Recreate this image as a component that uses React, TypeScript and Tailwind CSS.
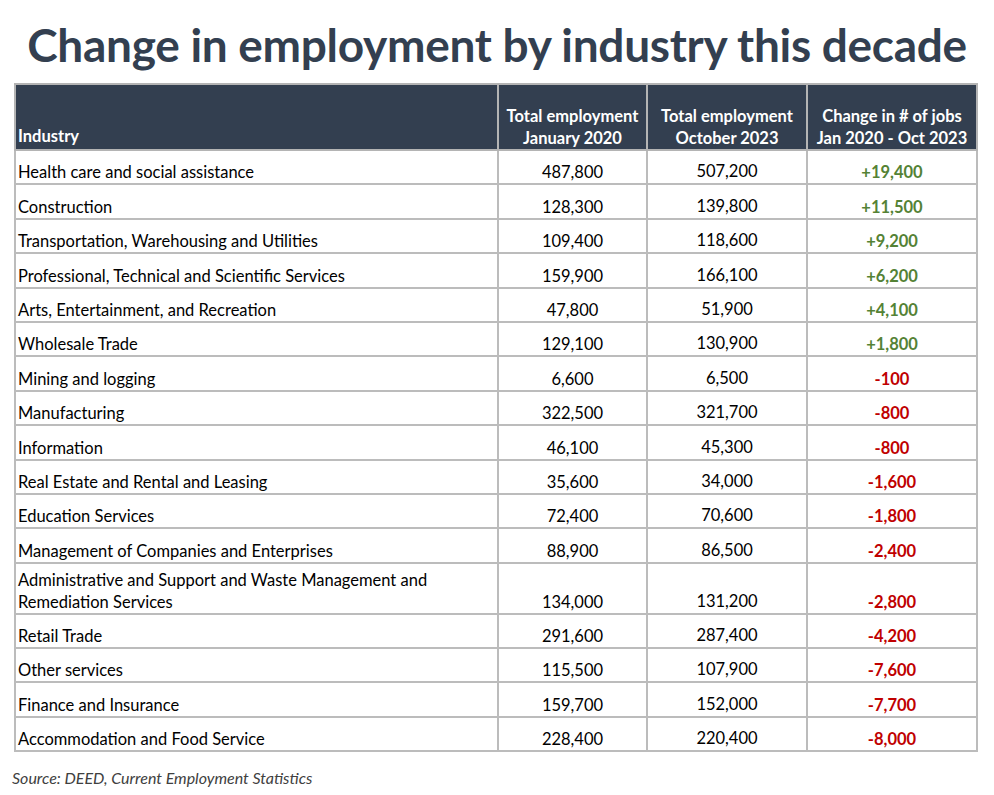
const rows: [string, string, string, string][] = [
  ['Health care and social assistance', '487,800', '507,200', '+19,400'],
  ['Construction', '128,300', '139,800', '+11,500'],
  ['Transportation, Warehousing and Utilities', '109,400', '118,600', '+9,200'],
  ['Professional, Technical and Scientific Services', '159,900', '166,100', '+6,200'],
  ['Arts, Entertainment, and Recreation', '47,800', '51,900', '+4,100'],
  ['Wholesale Trade', '129,100', '130,900', '+1,800'],
  ['Mining and logging', '6,600', '6,500', '-100'],
  ['Manufacturing', '322,500', '321,700', '-800'],
  ['Information', '46,100', '45,300', '-800'],
  ['Real Estate and Rental and Leasing', '35,600', '34,000', '-1,600'],
  ['Education Services', '72,400', '70,600', '-1,800'],
  ['Management of Companies and Enterprises', '88,900', '86,500', '-2,400'],
  ['Administrative and Support and Waste Management and Remediation Services', '134,000', '131,200', '-2,800'],
  ['Retail Trade', '291,600', '287,400', '-4,200'],
  ['Other services', '115,500', '107,900', '-7,600'],
  ['Finance and Insurance', '159,700', '152,000', '-7,700'],
  ['Accommodation and Food Service', '228,400', '220,400', '-8,000'],
];

export default function App() {
  return (
    <div
      className="w-[994px] h-[795px] bg-white overflow-hidden"
      style={{ fontFamily: 'Lato, "Open Sans", sans-serif' }}
    >
      <h1 className="text-center text-[46px] font-bold text-[#333f50] leading-none pt-[22px] pb-[15px] tracking-[-0.3px]">
        Change in employment by industry this decade
      </h1>
      <table className="ml-[14px] w-[962px] border-collapse table-fixed text-[16.5px] text-black">
        <colgroup>
          <col className="w-[483px]" />
          <col className="w-[149px]" />
          <col className="w-[160px]" />
          <col className="w-[170px]" />
        </colgroup>
        <thead>
          <tr className="h-[66px] bg-[#333f50] text-white font-bold">
            <th className="border-2 border-[#b4b4b4] text-left align-bottom px-[2px] pb-[0px] font-bold">Industry</th>
            <th className="border-2 border-[#b4b4b4] text-center align-bottom pb-[0px] leading-[22px] font-bold">
              Total employment<br />January 2020
            </th>
            <th className="border-2 border-[#b4b4b4] text-center align-bottom pb-[0px] leading-[22px] font-bold">
              Total employment<br />October 2023
            </th>
            <th className="border-2 border-[#b4b4b4] text-center align-bottom pb-[0px] leading-[22px] font-bold">
              Change in # of jobs<br />Jan 2020 - Oct 2023
            </th>
          </tr>
        </thead>
        <tbody>
          {rows.map(([name, jan, oct, change]) => {
            const multi = name.length > 60;
            return (
              <tr key={name} className={multi ? 'h-[51px]' : 'h-[34.4px]'}>
                <td className="border-2 border-[#bcbcbc] px-[2px] align-bottom pb-0 leading-[22px]">
                  {multi ? (
                    <>
                      Administrative and Support and Waste Management and<br />Remediation Services
                    </>
                  ) : (
                    name
                  )}
                </td>
                <td className="border-2 border-[#bcbcbc] text-center align-bottom pb-0 leading-[22px]">{jan}</td>
                <td className="border-2 border-[#bcbcbc] text-center align-bottom pb-[1px] leading-[22px]">{oct}</td>
                <td
                  className={
                    'border-2 border-[#bcbcbc] text-center align-bottom pb-0 leading-[21px] font-bold ' +
                    (change.startsWith('+') ? 'text-[#548235]' : 'text-[#c00000]')
                  }
                >
                  {change}
                </td>
              </tr>
            );
          })}
        </tbody>
      </table>
      <p className="ml-[12px] mt-[14px] text-[16px] italic text-[#404040]">
        Source: DEED, Current Employment Statistics
      </p>
    </div>
  );
}
